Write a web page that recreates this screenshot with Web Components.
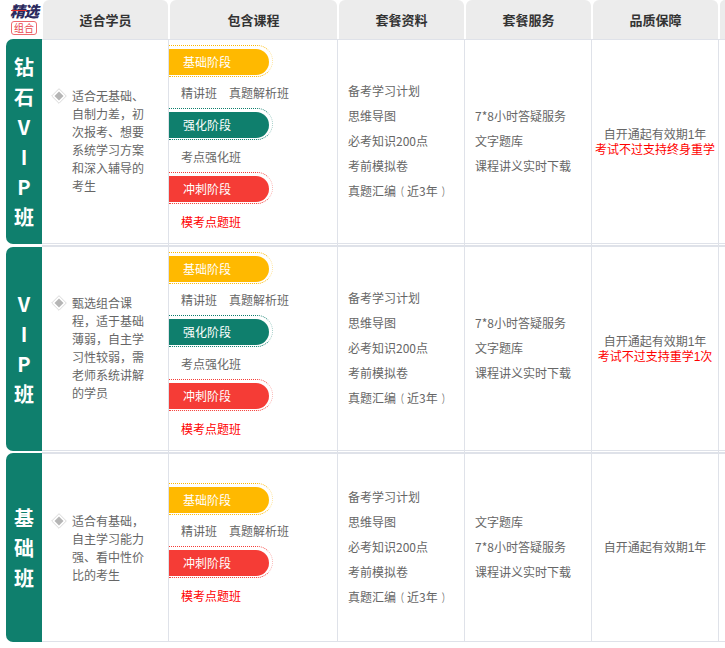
<!DOCTYPE html>
<html lang="zh"><head><meta charset="utf-8">
<style>
html,body{margin:0;padding:0;background:#fff;overflow:hidden}
body{width:725px;height:648px;font:12px/18px "Liberation Sans","Noto Sans CJK SC",sans-serif;color:#666;text-spacing-trim:space-all}
</style></head><body>
<vip-plans>
<vip-head></vip-head>
<vip-row label="钻石VIP班" style="--h:207px;--gh:205px;--gt:0px">
 <span slot="who">适合无基础、自制力差，初次报考、想要系统学习方案和深入辅导的考生</span>
 <stage-pill slot="courses" tone="y">基础阶段</stage-pill>
 <course-line slot="courses"><span>精讲班</span><span>真题解析班</span></course-line>
 <stage-pill slot="courses" tone="g">强化阶段</stage-pill>
 <course-line slot="courses" wide><span>考点强化班</span></course-line>
 <stage-pill slot="courses" tone="r">冲刺阶段</stage-pill>
 <course-line slot="courses" tone="red" last><span>模考点题班</span></course-line>
 <text-list slot="material"><div>备考学习计划</div><div>思维导图</div><div>必考知识200点</div><div>考前模拟卷</div><div>真题汇编<em-paren>（</em-paren>近3年<em-paren end>）</em-paren></div></text-list>
 <text-list slot="service"><div>7*8小时答疑服务</div><div>文字题库</div><div>课程讲义实时下载</div></text-list>
 <div slot="quality">自开通起有效期1年</div><div slot="quality" style="color:#f00">考试不过支持终身重学</div>
</vip-row>
<vip-row label="VIP班" style="--h:207px;--gh:204px;--gt:1px">
 <span slot="who">甄选组合课程，适于基础薄弱，自主学习性较弱，需老师系统讲解的学员</span>
 <stage-pill slot="courses" tone="y">基础阶段</stage-pill>
 <course-line slot="courses"><span>精讲班</span><span>真题解析班</span></course-line>
 <stage-pill slot="courses" tone="g">强化阶段</stage-pill>
 <course-line slot="courses" wide><span>考点强化班</span></course-line>
 <stage-pill slot="courses" tone="r">冲刺阶段</stage-pill>
 <course-line slot="courses" tone="red" last><span>模考点题班</span></course-line>
 <text-list slot="material"><div>备考学习计划</div><div>思维导图</div><div>必考知识200点</div><div>考前模拟卷</div><div>真题汇编<em-paren>（</em-paren>近3年<em-paren end>）</em-paren></div></text-list>
 <text-list slot="service"><div>7*8小时答疑服务</div><div>文字题库</div><div>课程讲义实时下载</div></text-list>
 <div slot="quality">自开通起有效期1年</div><div slot="quality" style="color:#f00">考试不过支持重学1次</div>
</vip-row>
<vip-row label="基础班" style="--h:189px;--gh:189px;--gt:0px">
 <span slot="who">适合有基础，自主学习能力强、看中性价比的考生</span>
 <stage-pill slot="courses" tone="y">基础阶段</stage-pill>
 <course-line slot="courses"><span>精讲班</span><span>真题解析班</span></course-line>
 <stage-pill slot="courses" tone="r">冲刺阶段</stage-pill>
 <course-line slot="courses" tone="red" last><span>模考点题班</span></course-line>
 <text-list slot="material"><div>备考学习计划</div><div>思维导图</div><div>必考知识200点</div><div>考前模拟卷</div><div>真题汇编<em-paren>（</em-paren>近3年<em-paren end>）</em-paren></div></text-list>
 <text-list slot="service"><div>文字题库</div><div>7*8小时答疑服务</div><div>课程讲义实时下载</div></text-list>
 <div slot="quality">自开通起有效期1年</div>
</vip-row>
</vip-plans>
<script>
const COLS='36px 127px 169px 127px 127px 127px 6px';
function def(name,html,init){
  customElements.define(name,class extends HTMLElement{
    constructor(){super();this.attachShadow({mode:'open'}).innerHTML=html;}
    connectedCallback(){if(init)init(this);}
  });
}
def('vip-plans',`<style>:host{display:block;width:725px;height:648px;overflow:hidden}</style><slot></slot>`);
def('em-paren',`<style>:host{display:inline-block;font-size:8px;line-height:12px;margin-right:3px;transform:translateY(-1.5px) scaleY(1.4)}:host([end]){margin:0 0 0 4px}</style><slot></slot>`);
def('vip-logo',`<style>
:host{display:flex;flex-direction:column;align-items:center;width:36px;text-spacing-trim:space-all}
.t{font:italic 900 15px/17px "Noto Sans CJK SC",sans-serif;color:#2b2a5e;letter-spacing:-1px;position:relative;margin-top:2px;white-space:nowrap}
.t::after{content:"";position:absolute;left:1px;right:11px;top:8px;height:1px;background:#e5322d}
.b{font:10px/12px "Noto Sans CJK SC",sans-serif;color:#e8474c;border:1px solid #ee6b6f;border-radius:3px;padding:0 2px;margin-top:2px;height:14px;box-sizing:border-box;position:relative}
</style><div class="t">精选</div><div class="b">组合</div>`);
def('vip-head',`<style>
:host{display:grid;grid-template-columns:42px 1px 125px 2px 167px 2px 125px 2px 125px 2px 125px 2px 5px;height:39px}
.c{background:#ececec;border-radius:6px 6px 0 0;display:flex;align-items:center;justify-content:center;font:bold 13px/18px "Noto Sans CJK SC",sans-serif;color:#333}
.s{display:block}
.logo{display:flex;justify-content:flex-end}
</style>
<div class="logo"><vip-logo></vip-logo></div><i class="s"></i>
<div class="c">适合学员</div><i class="s"></i>
<div class="c">包含课程</div><i class="s"></i>
<div class="c">套餐资料</div><i class="s"></i>
<div class="c">套餐服务</div><i class="s"></i>
<div class="c">品质保障</div><i class="s"></i>
<div class="c" style="border-radius:6px 0 0 0"></div>`);
def('vip-row',`<style>
:host{display:block;padding-left:6px;height:var(--h);box-sizing:border-box}
.g{display:grid;grid-template-columns:${COLS};height:100%}
.side{background:#0f7f6d;color:#fff;border-radius:7px 0 0 7px;height:var(--gh);margin-top:var(--gt);display:flex;flex-direction:column;align-items:center;justify-content:center;font:bold 20px/30px "Noto Sans CJK SC",sans-serif}
.cell{border-top:1px solid #dfe2e9;border-right:1px solid #dfe2e9;border-bottom:3px double #dfe2e9;box-sizing:border-box;min-width:0;display:flex;flex-direction:column;justify-content:center}
.who{flex-direction:row;justify-content:flex-start;align-items:center;padding-left:9px;padding-bottom:2px}
.who svg{flex:none;margin-right:5px;margin-top:1px}
.who .w{width:72px;line-height:18px;font-family:"Noto Sans CJK SC",sans-serif}
.wrap{display:flex;align-items:flex-start}
.courses{align-items:flex-start}
.material,.service{padding-left:10px;padding-bottom:2px}
.quality{align-items:center;text-align:center;line-height:15px;padding-top:2px;font-family:"Liberation Sans","Noto Sans CJK SC",sans-serif}
.end{border-right:0}
:host([label="基础班"]) .cell{border-bottom:1px solid #dfe2e9}
:host([label="基础班"]) .who{padding-top:1px;padding-bottom:0}
</style>
<div class="g">
 <div class="side"></div>
 <div class="cell who"><div class="wrap"><svg width="16" height="16" viewBox="0 0 16 16"><path d="M8 .7 15.3 8 8 15.3.7 8Z" fill="#fff" stroke="#d9d9d9"/><path d="M8 3.5 12.5 8 8 12.5 3.5 8Z" fill="#b5b5b5"/></svg><div class="w"><slot name="who"></slot></div></div></div>
 <div class="cell courses"><slot name="courses"></slot></div>
 <div class="cell material"><slot name="material"></slot></div>
 <div class="cell service"><slot name="service"></slot></div>
 <div class="cell quality"><slot name="quality"></slot></div>
 <div class="cell end"></div>
</div>`,el=>{
  const s=el.shadowRoot.querySelector('.side');
  if(!s.childElementCount)[...el.getAttribute('label')].forEach(ch=>{const d=document.createElement('div');d.textContent=ch;s.append(d);});
});
def('stage-pill',`<style>
:host{display:block;width:104px;height:32px;box-sizing:border-box;border:1px dotted var(--c);border-right-color:color-mix(in srgb,var(--c) 40%,#fff);border-left:0;border-radius:0 16px 16px 0;padding-top:3px;--c:#ffb900}
:host([tone=g]){--c:#0f7f6d}
:host([tone=r]){--c:#f53c36}
.p{width:100px;height:26px;background:var(--c);border-radius:0 13px 13px 0;color:#fff;font:12px/25px "Noto Sans CJK SC",sans-serif;padding-left:14px;box-sizing:border-box}
</style><div class="p"><slot></slot></div>`);
def('course-line',`<style>
:host{display:flex;gap:12px;padding:1px 0 0 12px;box-sizing:border-box;height:31px;align-items:center;font:12px/18px "Noto Sans CJK SC",sans-serif;color:#666}
:host([wide]){height:32px}
:host([tone=red]){color:#f00}
:host([last]){height:34px}
</style><slot></slot>`);
def('text-list',`<style>
:host{display:block;font:12px/25px "Noto Sans CJK SC",sans-serif;color:#666;text-spacing-trim:space-all}
</style><slot></slot>`);
</script>
</body></html>
